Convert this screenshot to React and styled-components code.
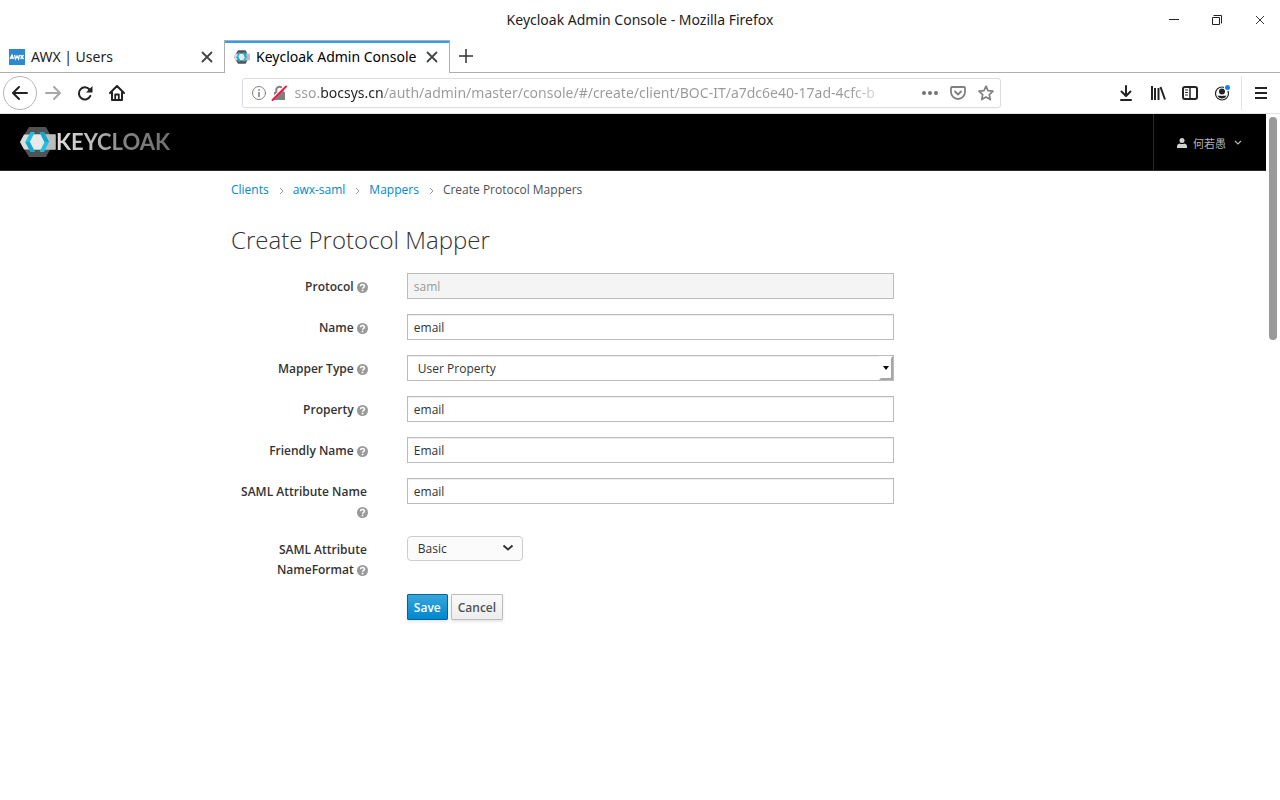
import React from "react";
import styled, { createGlobalStyle } from "styled-components";

const GlobalStyle = createGlobalStyle`
  *, *::before, *::after { box-sizing: border-box; }
  body { margin: 0; background: #fff; font-family: "Open Sans", "Noto Sans", "Noto Sans CJK SC", sans-serif; font-size: 12px; color: #333; }
  button, input, select { font: inherit; color: inherit; margin: 0; }
`;

const Window = styled.div`
  display: flex;
  flex-direction: column;
  min-height: 100vh;
`;

/* ---- window frame ---- */

const Chrome = styled.div`
  font-family: "Noto Sans", sans-serif;
  font-size: 14px;
  color: #222;
`;

const TitleBar = styled.div`
  display: grid;
  grid-template-columns: 1fr auto 1fr;
  align-items: center;
  height: 40px;
`;

const WindowTitle = styled.div`
  grid-column: 2;
  padding-bottom: 2px;
`;

const WindowControls = styled.div`
  display: flex;
  justify-content: flex-end;
  gap: 3px;
`;

const IconButton = styled.button`
  display: flex;
  flex: none;
  align-items: center;
  justify-content: center;
  width: ${(p) => p.$width || 32}px;
  height: ${(p) => p.$height || 34}px;
  padding: 0;
  border: ${(p) => (p.$round ? "1px solid #b5b5b5" : "0")};
  border-radius: ${(p) => (p.$round ? "50%" : "0")};
  background: none;
  color: ${(p) => p.$color || "#222"};
`;

const TabStrip = styled.div`
  display: flex;
  height: 33px;
  box-shadow: inset 0 -1px #aeaeae;
`;

const Tab = styled.div`
  display: flex;
  align-items: center;
  width: ${(p) => (p.$active ? 226 : 224)}px;
  padding: 0 8px 0 9px;
  color: ${(p) => (p.$active ? "#000" : "#222")};
  ${(p) =>
    p.$active &&
    `padding-bottom: 1px; background: #fff; border: 1px solid #aeaeae; border-bottom: 0; box-shadow: inset 0 2px #2f9ef0;`}
`;

const TabLabel = styled.span`
  flex: 1;
  padding-left: 6px;
  white-space: nowrap;
`;

const Toolbar = styled.div`
  display: flex;
  align-items: center;
  height: 41px;
  padding: 0 3px;
  border-bottom: 1px solid #e1e1e2;
`;

const AddressArea = styled.div`
  flex: 1;
  display: grid;
  grid-template-columns: minmax(0, 1fr) minmax(0, 7fr) minmax(0, 1fr);
`;

const AddressBar = styled.div`
  grid-column: 2;
  display: flex;
  align-items: center;
  height: 30px;
  padding: 0 0 0 8px;
  border: 1px solid #dcdce2;
  border-radius: 3px;
  box-shadow: 0 1px 3px rgba(0, 0, 0, 0.04);
`;

const AddressInput = styled.input`
  flex: 1;
  min-width: 0;
  height: 28px;
  margin-left: 8px;
  padding: 0 0 2px;
  border: 0;
  outline: 0;
  background: linear-gradient(90deg, #999 26px, #222 26px, #222 89px, #999 89px);
  background-clip: text;
  -webkit-background-clip: text;
  color: transparent;
  mask-image: linear-gradient(90deg, #000 calc(100% - 66px), transparent calc(100% - 26px));
`;

const Separator = styled.div`
  width: 1px;
  height: 34px;
  margin: 0 3px;
  background: #e4e4e4;
`;

/* ---- page ---- */

const Viewport = styled.div`
  flex: 1;
  display: flex;
`;

const Page = styled.div`
  flex: 1;
  min-width: 0;
`;

const ScrollTrack = styled.div`
  width: 14px;
  padding: 3px;
`;

const ScrollThumb = styled.div`
  width: 8px;
  height: 223px;
  border-radius: 4px;
  background: #999;
`;

const Header = styled.header`
  display: flex;
  justify-content: space-between;
  height: 57px;
  border-bottom: 1px solid #292929;
  background: #000;
`;

const Brand = styled.a`
  display: flex;
  align-items: center;
  padding-left: 20px;
  text-decoration: none;
`;

const BrandName = styled.span`
  font: 700 22px/30px Lato, sans-serif;
  background: linear-gradient(90deg, #dedede, #c0c0c0 30%, #848484 60%, #6f6f6f);
  background-clip: text;
  -webkit-background-clip: text;
  color: transparent;
`;

const UserMenu = styled.button`
  display: flex;
  align-items: center;
  gap: 6px;
  padding: 2px 24px 0 23px;
  border: 0;
  border-left: 1px solid #2b2b2b;
  background: none;
  color: #b5b5b5;
  font-size: 11px;
`;

const Main = styled.main`
  margin-left: calc(100% / 6);
`;

const Breadcrumb = styled.nav`
  display: flex;
  align-items: center;
  padding: 9px 20px 0;
  line-height: 20px;
  color: #4d5258;
`;

const Crumb = styled.a`
  color: #0088ce;
  text-decoration: none;
`;

const CrumbArrow = styled.svg`
  width: 5px;
  height: 8px;
  margin: 1px 9px 0 10px;
`;

const Title = styled.h1`
  margin: 27px 20px 20px;
  font-size: 24px;
  font-weight: 300;
  line-height: 26px;
`;

const FormRow = styled.div`
  display: grid;
  grid-template-columns: 2fr 6fr 4fr;
  margin-bottom: 15px;
`;

const Label = styled.label`
  margin-bottom: -1px;
  padding: 4px 20px 0;
  font-weight: 600;
  line-height: 20px;
  text-align: right;
`;

const Control = styled.div`
  grid-column: 2;
  padding: 0 20px;
`;

const TextInput = styled.input`
  display: block;
  width: 100%;
  height: 26px;
  padding: 0 6px;
  border: 1px solid #bbb;
  border-radius: 0;
  background: #fff;
  box-shadow: inset 0 1px 1px rgba(0, 0, 0, 0.075);
  &:disabled { background: #f4f4f4; color: #999; box-shadow: none; }
`;

const SelectBox = styled.div`
  position: relative;
  width: ${(p) => (p.$small ? "116px" : "100%")};
`;

const Select = styled.select`
  display: block;
  appearance: none;
  width: 100%;
  height: ${(p) => (p.$small ? 25 : 26)}px;
  padding: 0 10px;
  border: 1px solid ${(p) => (p.$small ? "#ccc" : "#bbb")};
  border-radius: ${(p) => (p.$small ? 4 : 0)}px;
  background: ${(p) => (p.$small ? "#fbfbfb" : "#fff")};
  box-shadow: ${(p) => (p.$small ? "none" : "inset 0 1px 1px rgba(0, 0, 0, 0.075)")};
`;

const BevelArrow = styled.span`
  position: absolute;
  top: 1px;
  right: 1px;
  display: flex;
  align-items: center;
  justify-content: center;
  width: 14px;
  height: 24px;
  border: 2px solid;
  border-color: #fff #a6a6a6 #a6a6a6 #fff;
  background: #fff;
  pointer-events: none;
`;

const ChevronArrow = styled.svg`
  position: absolute;
  top: 8px;
  right: 9px;
  width: 12px;
  height: 8px;
  pointer-events: none;
`;

const Actions = styled.div`
  display: flex;
  gap: 3px;
`;

const Button = styled.button`
  height: 26px;
  padding: 0 6px;
  border: 1px solid ${(p) => (p.$primary ? "#00659c" : "#bbb")};
  border-radius: 1px;
  background: ${(p) =>
    p.$primary
      ? "linear-gradient(#39a5dc, #0088ce)"
      : "linear-gradient(#fafafa, #ededed)"};
  box-shadow: 0 2px 3px rgba(3, 3, 3, 0.1);
  color: ${(p) => (p.$primary ? "#fff" : "#4d5258")};
  font-weight: 600;
`;

const HelpSvg = styled.svg`
  width: 11px;
  height: 11px;
  margin: 0 -1px 0 0;
  vertical-align: -2px;
`;

const Help = () => (
  <HelpSvg viewBox="0 0 10 10" aria-hidden="true">
    <circle cx="5" cy="5" r="5" fill="#999" />
    <path d="M3.2 3.8C3.3 1.7 6.8 1.8 6.8 3.8C6.8 5 5.1 4.9 5.1 6.2" fill="none" stroke="#fff" strokeWidth="1.4" />
    <path d="M4.3 7h1.5v1.4H4.3z" fill="#fff" />
  </HelpSvg>
);

const Icon = ({ size = 16, children, ...rest }) => (
  <svg width={size} height={size} viewBox="0 0 16 16" fill="none" stroke="currentColor" strokeWidth="2" strokeLinecap="round" strokeLinejoin="round" aria-hidden="true" {...rest}>
    {children}
  </svg>
);

const Hexagon = (props) => (
  <svg viewBox="0 0 36 30" aria-hidden="true" {...props}>
    <path d="M9 0H26L34 15L26 30H9L0 15z" fill="#505254" />
    <path d="M4 7.5H35.500V22.5H4L0 15z" fill="#dcdcdc" />
    <path d="M24 7.5H35.500V22.5H24L28 15z" fill="#bcbcbc" />
    <path d="M13 7.5H22L26 15L22 22.5H13L9 15z" fill="#e8e8e8" />
    <path d="M10.500 5H15L9.800 15L15 25H10.500L5.300 15z" fill="#22bfe4" />
    <path d="M5.300 15H9.800L15 25H10.500z" fill="#12a9cc" />
    <path d="M19.500 5H24L29 15L24 25H19.500L24.500 15z" fill="#22bfe4" />
    <path d="M19.500 5H24L29 15H24.500z" fill="#12a9cc" />
  </svg>
);

const CloseIcon = () => (
  <Icon size={12} strokeWidth="2.400" color="#444"><path d="M2 2l12 12M14 2L2 14" /></Icon>
);

const Arrow = () => (
  <CrumbArrow viewBox="0 0 5 8" aria-hidden="true">
    <path d="M1 1l3 3-3 3" fill="none" stroke="#9c9c9c" strokeWidth="1" />
  </CrumbArrow>
);

const Field = ({ id, label, children }) => (
  <FormRow>
    <Label htmlFor={id}>{label} <Help /></Label>
    <Control>{children}</Control>
  </FormRow>
);

const TextField = ({ id, label, value, disabled }) => (
  <Field id={id} label={label}>
    <TextInput id={id} type="text" defaultValue={value} disabled={disabled} />
  </Field>
);

function BrowserChrome() {
  return (
    <Chrome>
      <TitleBar>
        <WindowTitle>Keycloak Admin Console - Mozilla Firefox</WindowTitle>
        <WindowControls>
          <IconButton $width={40} aria-label="Minimize">
            <svg width="10" height="10"><path d="M0 4.500h10" stroke="#222" /></svg>
          </IconButton>
          <IconButton $width={40} aria-label="Restore">
            <svg width="10" height="10" fill="none" stroke="#222"><path d="M.5 2.500h7v7h-7zM1.500 .5h8v8" /></svg>
          </IconButton>
          <IconButton $width={40} aria-label="Close">
            <svg width="10" height="10"><path d="M1 1l8 8M9 1L1 9" stroke="#333" /></svg>
          </IconButton>
        </WindowControls>
      </TitleBar>

      <TabStrip>
        <Tab>
          <svg width="16" height="16" viewBox="0 0 16 16" aria-hidden="true">
            <path d="M0 0h16v16H0z" fill="#2e88cc" />
            <path d="M1 10l2-4 1.500 4M2 9h2M5.500 6l1 4 1.500-3 1.500 3 1-4M11.500 6l3 4M14.500 6l-3 4" stroke="#fff" strokeWidth="1.300" fill="none" />
          </svg>
          <TabLabel>AWX | Users</TabLabel>
          <IconButton $width={18} $height={18} aria-label="Close tab"><CloseIcon /></IconButton>
        </Tab>
        <Tab $active>
          <Hexagon width="16" height="14" />
          <TabLabel>Keycloak Admin Console</TabLabel>
          <IconButton $width={18} $height={18} aria-label="Close tab"><CloseIcon /></IconButton>
        </Tab>
        <IconButton $height={32} aria-label="New tab">
          <svg width="14" height="14"><path d="M7 0v14M0 7h14" stroke="#333" strokeWidth="1.500" /></svg>
        </IconButton>
      </TabStrip>

      <Toolbar>
        <IconButton $width={34} $round aria-label="Back">
          <Icon><path d="M1.500 8h13.500M7 2L1 8l6 6" /></Icon>
        </IconButton>
        <IconButton $color="#a8a8a8" aria-label="Forward">
          <Icon><path d="M1 8h13.500M9 2l6 6-6 6" /></Icon>
        </IconButton>
        <IconButton aria-label="Reload">
          <Icon><path d="M12.500 4.500A6 6 0 1 0 13.300 11" /><path d="M15.500 1v6.500H9z" fill="currentColor" stroke="none" /></Icon>
        </IconButton>
        <IconButton aria-label="Home">
          <Icon><path d="M1 8l7-7 7 7M3 7.500V15h10V7.500" /><path d="M6.200 14V9.500h3.600V14" strokeWidth="1.800" /></Icon>
        </IconButton>

        <AddressArea>
          <AddressBar>
            <Icon color="#808080" strokeWidth="1"><circle cx="8" cy="8" r="6.500" /><path d="M8 7.500v4M8 4.800v.4" strokeWidth="1.600" /></Icon>
            <Icon color="#808080" style={{ marginLeft: 4 }}>
              <path d="M3 7h11v8H3z" fill="currentColor" stroke="none" />
              <path d="M5.300 8V5a3.200 3.200 0 0 1 6.400 0v3" />
              <path d="M1.500 13L13 1.500" stroke="#fff" strokeWidth="1.500" />
              <path d="M1.500 15L15 1.500" stroke="#ff0f45" strokeWidth="1.800" />
            </Icon>
            <AddressInput aria-label="Address" defaultValue="sso.bocsys.cn/auth/admin/master/console/#/create/client/BOC-IT/a7dc6e40-17ad-4cfc-b" />
            <IconButton $width={28} $height={28} $color="#737373" aria-label="Page actions">
              <Icon stroke="none" fill="currentColor"><circle cx="2" cy="8" r="2" /><circle cx="8" cy="8" r="2" /><circle cx="14" cy="8" r="2" /></Icon>
            </IconButton>
            <IconButton $width={28} $height={28} $color="#808080" aria-label="Save to Pocket">
              <Icon><path d="M2 2h12a1 1 0 0 1 1 1v4a7 7 0 0 1-14 0V3a1 1 0 0 1 1-1zM5 6.500l3 3 3-3" strokeWidth="1.800" /></Icon>
            </IconButton>
            <IconButton $width={28} $height={28} $color="#808080" aria-label="Bookmark">
              <Icon><path d="M8 1.200l2 4.500 5 .5-3.700 3.400 1 5L8 12l-4.300 2.600 1-5L1 6.200l5-.5z" strokeWidth="1.700" /></Icon>
            </IconButton>
          </AddressBar>
        </AddressArea>

        <IconButton aria-label="Downloads">
          <Icon><path d="M8 1v9M3.500 6.500L8 11l4.500-4.500M3 15h10" /></Icon>
        </IconButton>
        <IconButton aria-label="Library">
          <Icon strokeLinecap="butt"><path d="M2 1v14M5 3v12M8.500 3v12M10.500 2L15 14.500" /></Icon>
        </IconButton>
        <IconButton aria-label="Sidebars">
          <Icon><rect x="1" y="2" width="14" height="12" rx="2" /><path d="M8 2v12" strokeWidth="1.500" /><path d="M3.500 5h2M3.500 7.500h2M3.500 10h2" strokeWidth="1" /></Icon>
        </IconButton>
        <IconButton aria-label="Account">
          <Icon>
            <circle cx="8" cy="8.500" r="6.500" strokeWidth="1.200" />
            <circle cx="8" cy="6.500" r="3" fill="currentColor" stroke="none" />
            <path d="M3.500 10.500c2 .5 7 .5 9 0-1 4-8 4-9 0z" fill="currentColor" stroke="none" />
            <circle cx="13.500" cy="2.500" r="3.500" fill="#fff" stroke="none" />
            <circle cx="13.500" cy="2.500" r="2.500" fill="#0a84ff" stroke="none" />
          </Icon>
        </IconButton>
        <Separator />
        <IconButton aria-label="Open menu">
          <Icon strokeLinecap="butt"><path d="M2 3h12M2 8h12M2 13h12" /></Icon>
        </IconButton>
      </Toolbar>
    </Chrome>
  );
}

export default function App() {
  return (
    <Window>
      <GlobalStyle />
      <BrowserChrome />
      <Viewport>
        <Page>
          <Header>
            <Brand href="#">
              <Hexagon width="36" height="30" />
              <BrandName>KEYCLOAK</BrandName>
            </Brand>
            <UserMenu>
              <svg width="10" height="10" viewBox="0 0 10 10" fill="#d1d1d1" aria-hidden="true">
                <circle cx="5" cy="2.500" r="2.500" />
                <path d="M0 10V8q0-2 2.500-2.500Q5 6.500 7.500 5.500Q10 6 10 8v2z" />
              </svg>
              何若愚
              <svg width="8" height="6" viewBox="0 0 8 6" style={{ marginLeft: 2 }} aria-hidden="true">
                <path d="M1 1l3 3 3-3" fill="none" stroke="#b5b5b5" strokeWidth="1.200" />
              </svg>
            </UserMenu>
          </Header>
          <Main>
            <Breadcrumb aria-label="Breadcrumb">
              <Crumb href="#">Clients</Crumb><Arrow />
              <Crumb href="#">awx-saml</Crumb><Arrow />
              <Crumb href="#">Mappers</Crumb><Arrow />
              <span>Create Protocol Mappers</span>
            </Breadcrumb>
            <Title>Create Protocol Mapper</Title>
            <form onSubmit={(e) => e.preventDefault()}>
              <TextField id="protocol" label="Protocol" value="saml" disabled />
              <TextField id="name" label="Name" value="email" />
              <Field id="mapperType" label="Mapper Type">
                <SelectBox>
                  <Select id="mapperType"><option>User Property</option></Select>
                  <BevelArrow>
                    <svg width="6" height="4" aria-hidden="true"><path d="M0 0h6L3 4z" /></svg>
                  </BevelArrow>
                </SelectBox>
              </Field>
              <TextField id="property" label="Property" value="email" />
              <TextField id="friendlyName" label="Friendly Name" value="Email" />
              <TextField id="attributeName" label="SAML Attribute Name" value="email" />
              <Field id="nameFormat" label="SAML Attribute NameFormat">
                <SelectBox $small>
                  <Select id="nameFormat" $small><option>Basic</option></Select>
                  <ChevronArrow viewBox="0 0 12 8" aria-hidden="true">
                    <path d="M1.500 1.500L6 5.500l4.500-4" fill="none" stroke="#333" strokeWidth="2" />
                  </ChevronArrow>
                </SelectBox>
              </Field>
              <FormRow>
                <Control>
                  <Actions>
                    <Button type="submit" $primary>Save</Button>
                    <Button type="button">Cancel</Button>
                  </Actions>
                </Control>
              </FormRow>
            </form>
          </Main>
        </Page>
        <ScrollTrack><ScrollThumb /></ScrollTrack>
      </Viewport>
    </Window>
  );
}
